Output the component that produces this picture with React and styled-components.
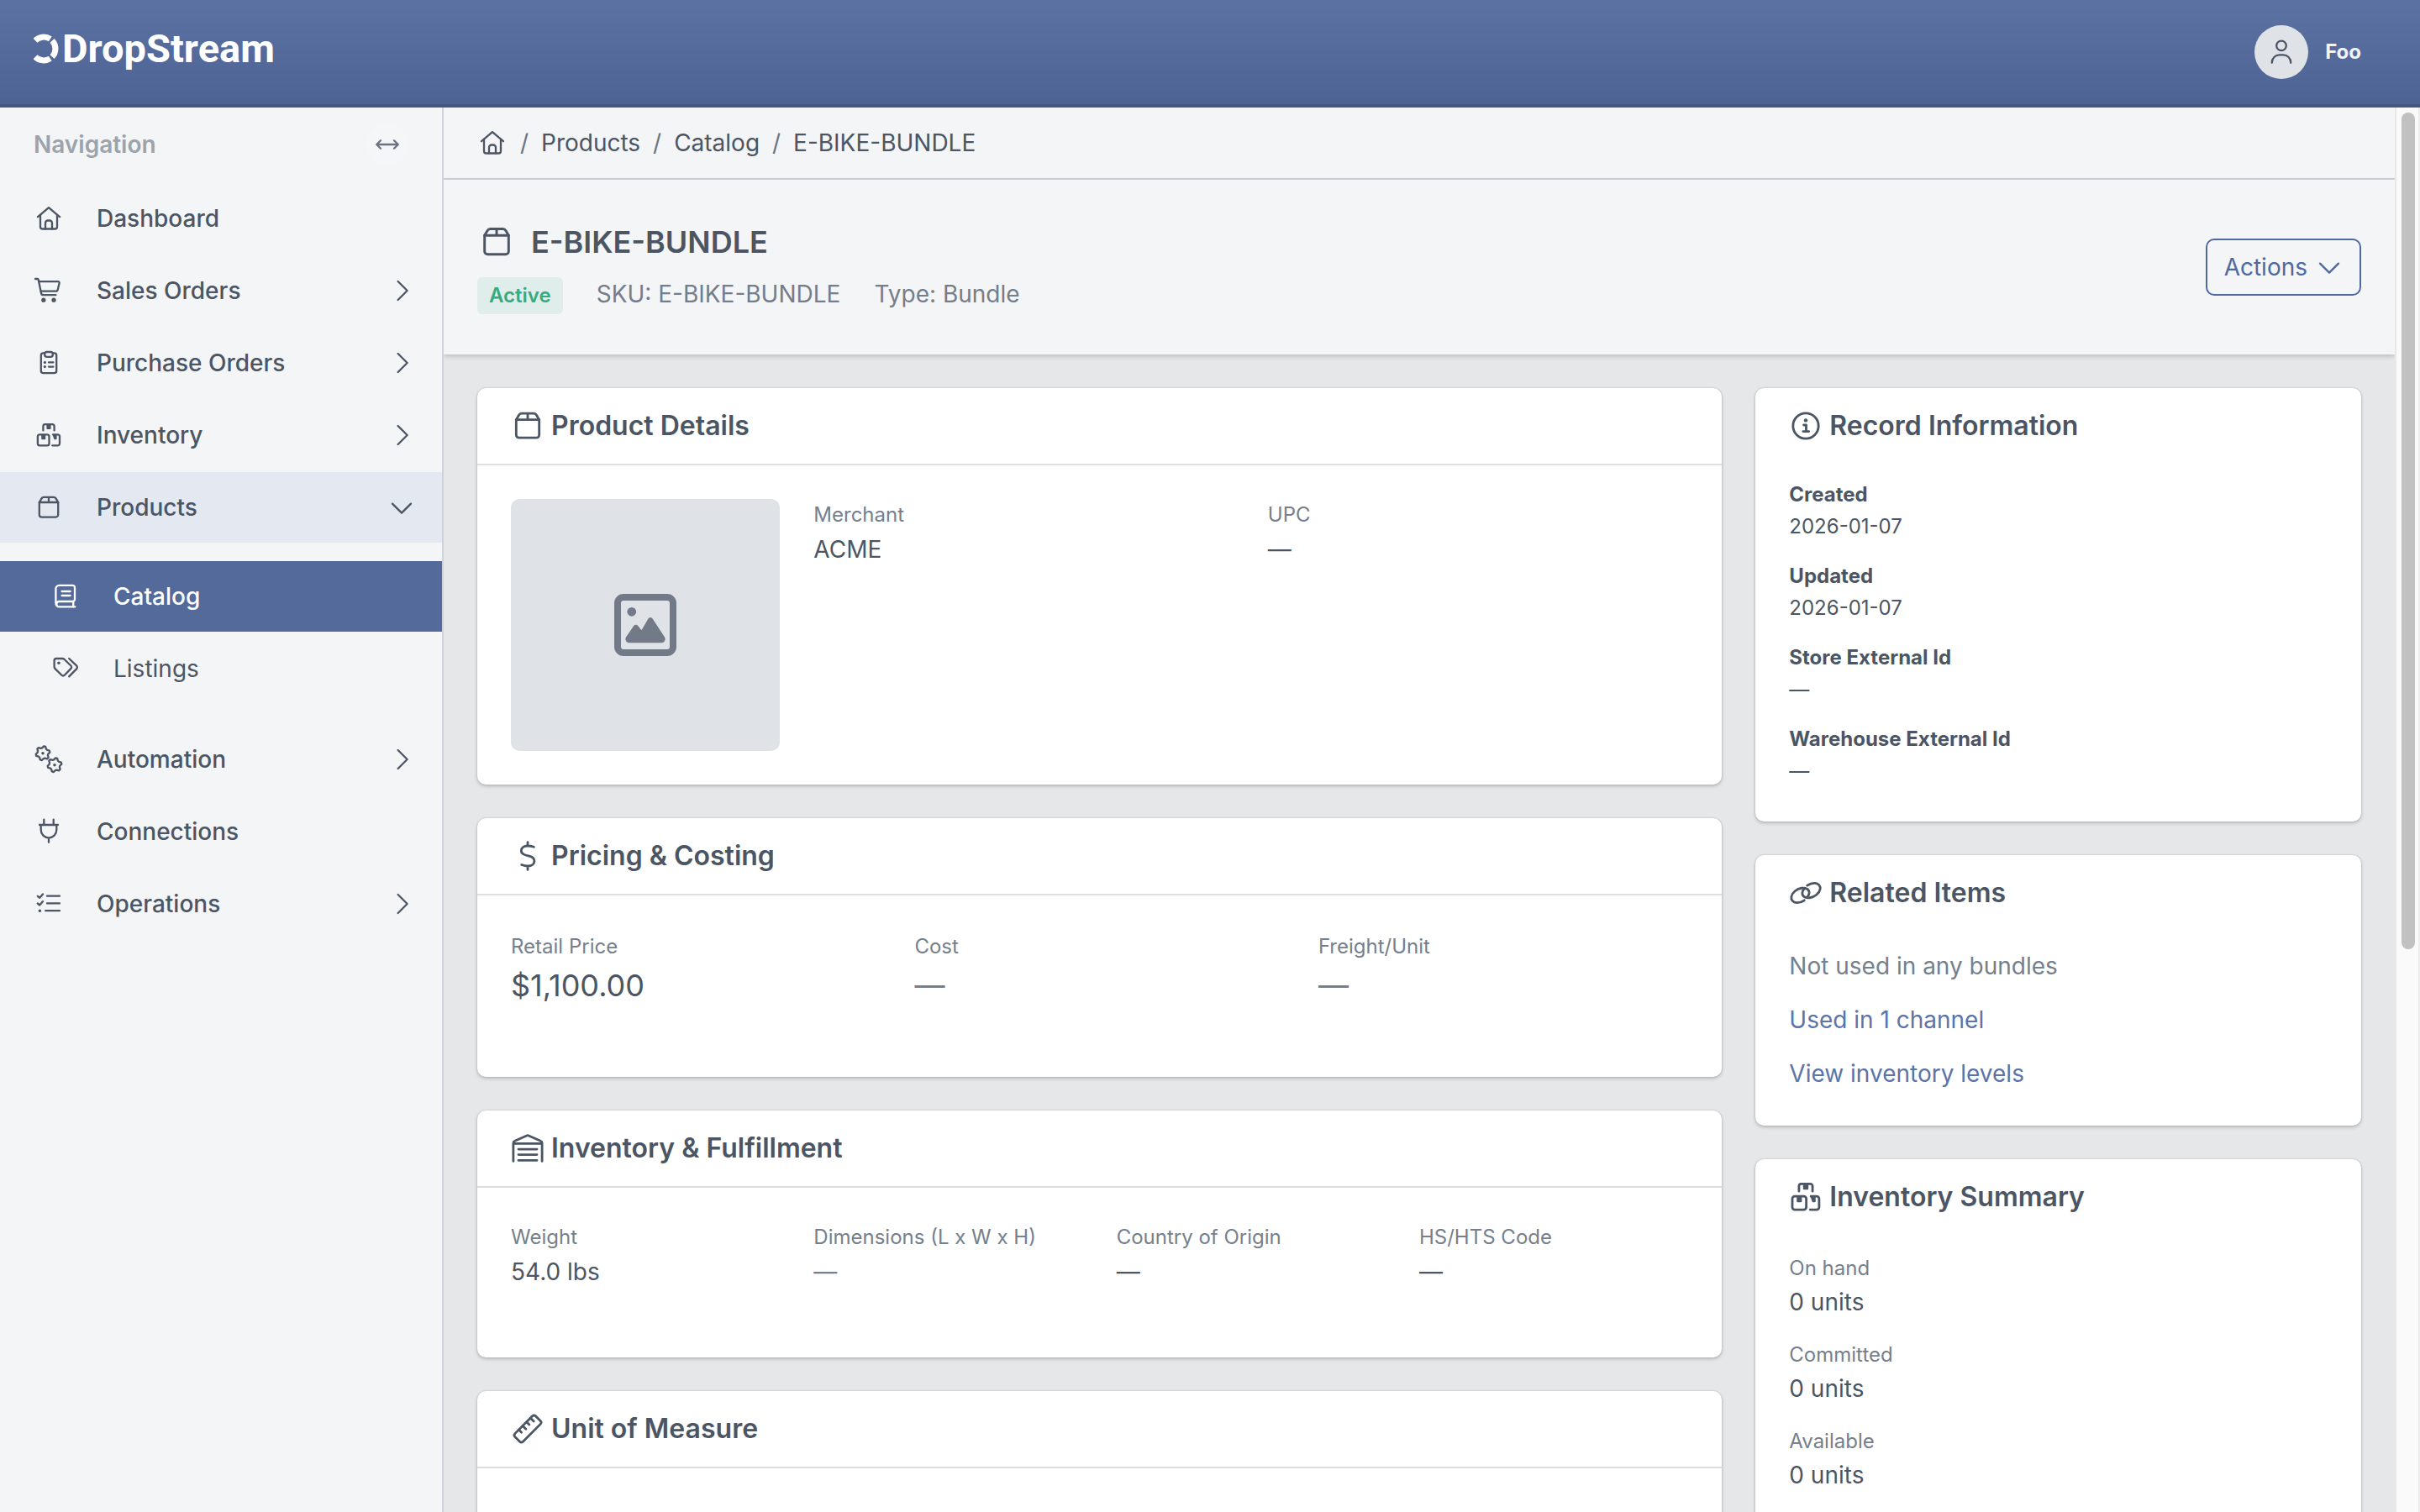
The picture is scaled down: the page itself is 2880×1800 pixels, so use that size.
import React from 'react';
import styled, { createGlobalStyle } from 'styled-components';

const GlobalStyle = createGlobalStyle`
    * {
        box-sizing: border-box;
    }
    body {
        margin: 0;
        background: #e6e7e9;
        color: #4b5563;
        font-family: Inter, "Liberation Sans", sans-serif;
        font-size: 28px;
        line-height: 44px;
    }
    a {
        color: inherit;
        text-decoration: none;
    }
    button {
        font: inherit;
        color: inherit;
        background: none;
        border: 0;
        padding: 0;
        cursor: pointer;
    }
    h1, h2, p, dl, dt, dd, ul, ol {
        margin: 0;
        padding: 0;
        list-style: none;
    }
`;

/* ---------- icons ---------- */

const Svg = styled.svg`
    display: block;
    flex: none;
    width: ${({ $size }) => $size || 36}px;
    height: ${({ $size }) => $size || 36}px;
    fill: none;
    stroke: currentColor;
    stroke-width: 2.3;
    stroke-linecap: round;
    stroke-linejoin: round;
    .solid {
        fill: currentColor;
        stroke: none;
    }
`;

const gear = (cx, cy) => {
    const points = [];
    for (let i = 0; i < 24; i += 1) {
        const angle = ((i * 15 + 7.5) * Math.PI) / 180;
        const r = i % 4 < 2 ? 6.4 : 8.4;
        points.push(`${(cx + r * Math.cos(angle)).toFixed(2)} ${(cy + r * Math.sin(angle)).toFixed(2)}`);
    }
    return `M${points.join('L')}Z`;
};

const shapes = {
    home: (
        <>
            <path d="M5 16.2 18 5.2l13 11" />
            <path d="M8 14v14a2.5 2.5 0 0 0 2.5 2.5h15A2.5 2.5 0 0 0 28 28V14" />
            <path d="M14 30.5v-7a3 3 0 0 1 3-3h2a3 3 0 0 1 3 3v7" />
        </>
    ),
    cart: (
        <>
            <path d="M2 4h2.3a1.5 1.5 0 0 1 1.5 1.2L9 20.9a2.8 2.8 0 0 0 2.8 2.3h14.6" />
            <path d="M6.4 7.2h22.8a1.5 1.5 0 0 1 1.4 1.9l-1.8 7.6a2.6 2.6 0 0 1-2.5 2H8.7" />
            <circle className="solid" cx="11.8" cy="29.2" r="2.6" />
            <circle className="solid" cx="24" cy="29.2" r="2.6" />
        </>
    ),
    clipboard: (
        <>
            <path d="M13 6.4h-1.6a2.6 2.6 0 0 0-2.6 2.6v18.6a2.6 2.6 0 0 0 2.6 2.6h13.2a2.6 2.6 0 0 0 2.6-2.6V9a2.6 2.6 0 0 0-2.6-2.6H23" />
            <rect x="13.2" y="5" width="9.6" height="5.8" rx="2.6" />
            <path d="M18 17.4h5.4M18 22.6h5.4" />
            <circle className="solid" cx="13.4" cy="17.4" r="1.6" />
            <circle className="solid" cx="13.4" cy="22.6" r="1.6" />
        </>
    ),
    boxes: (
        <>
            <path d="M11.4 12.4V7.4a2.2 2.2 0 0 1 2.2-2.2h8.8a2.2 2.2 0 0 1 2.2 2.2v5" />
            <rect x="4.9" y="17.3" width="13.6" height="13" rx="2.4" />
            <path d="M23 17.3h5.6a2.4 2.4 0 0 1 2.4 2.4v8.2a2.4 2.4 0 0 1-2.4 2.4h-6.3" />
            <path className="solid" d="M15.4 5h5.2v5a.9.9 0 0 1-.9.9h-3.4a.9.9 0 0 1-.9-.9zM9.2 17.3h5v5a.9.9 0 0 1-.9.9h-3.2a.9.9 0 0 1-.9-.9zM22.4 17.3h5.2v5a.9.9 0 0 1-.9.9h-2.2z" />
        </>
    ),
    box: (
        <>
            <path d="M6.8 12v14.8a2.8 2.8 0 0 0 2.8 2.8h16.8a2.8 2.8 0 0 0 2.8-2.8V12" />
            <path d="m6.8 12 2.7-4.6a3.2 3.2 0 0 1 2.7-1.6h11.6a3.2 3.2 0 0 1 2.7 1.6l2.7 4.6zM18 5.8V12" />
        </>
    ),
    book: (
        <>
            <path d="M10.4 30.3a4 4 0 0 1-4-4V8.8a4 4 0 0 1 4-4h16A2.6 2.6 0 0 1 29 7.4v14a2.6 2.6 0 0 1-2.6 2.6h-16a3.1 3.1 0 1 0 0 6.3h19" />
            <path d="M27.2 24v6.3M13.6 12h10M13.6 17h10" />
        </>
    ),
    tags: (
        <>
            <path d="M4.6 8.4A2.4 2.4 0 0 1 7 6h7.2a3.4 3.4 0 0 1 2.4 1l7.8 7.5a2.4 2.4 0 0 1 0 3.4l-7.6 7.9a2.4 2.4 0 0 1-3.4 0l-7.8-7.7a3.4 3.4 0 0 1-1-2.4z" />
            <path d="m22.2 6 8.8 8.4a2.8 2.8 0 0 1 0 4l-8.8 9" />
            <circle className="solid" cx="9.9" cy="11.3" r="1.8" />
        </>
    ),
    gears: (
        <>
            <path d={gear(11, 10.7)} />
            <path d={gear(25, 24.7)} />
            <circle className="solid" cx="11" cy="10.7" r="1.8" />
            <circle className="solid" cx="25" cy="24.7" r="1.8" />
        </>
    ),
    plug: (
        <path d="M12.3 3.6v6.2M23.7 3.6v6.2M7 10h22M8.7 10v6a9.3 9.3 0 0 0 18.6 0v-6M18 25.4v5.4" />
    ),
    checklist: (
        <>
            <path d="M16 8.7h15M16 17.4h15M14.2 26.2H31M4.8 8.8l2.4 2L11 6.4M4.8 17.5l2.4 2 3.8-4.4" />
            <circle className="solid" cx="7.4" cy="26.2" r="1.7" />
        </>
    ),
    dollar: (
        <path d="M18 4.6v3.6M18 27.8v3.6M24 9.2c-2-.7-4-1-6-1-3.8 0-6.3 1.9-6.3 4.7 0 2.6 2 3.7 5 4.5l2.8.7c3.2.8 5 2.2 5 4.8 0 3-2.7 4.9-6.3 4.9-2.3 0-4.2-.5-6.1-1.2" />
    ),
    warehouse: (
        <>
            <path d="M4 30.6V13a2.4 2.4 0 0 1 1.5-2.2L17 5.7a2.5 2.5 0 0 1 2 0l11.5 5.1A2.4 2.4 0 0 1 32 13v17.6M4 13.4h28" />
            <path d="M9 18.9h18M9 24.2h18M9 29.7h18" />
        </>
    ),
    ruler: (
        <>
            <path d="M22.6 5.6a2.2 2.2 0 0 1 3.1 0l4.7 4.7a2.2 2.2 0 0 1 0 3.1l-17 17a2.2 2.2 0 0 1-3.1 0l-4.7-4.7a2.2 2.2 0 0 1 0-3.1z" />
            <path d="m20.7 7.5 3.2 3.2M16.9 11.3l2.6 2.6M13.1 15.1l3.2 3.2M9.3 18.9l2.6 2.6" />
        </>
    ),
    info: (
        <>
            <circle cx="18" cy="18" r="12.4" />
            <path d="M16 17.2h2.4v6M15.4 23.4h5.6" />
            <circle className="solid" cx="18" cy="12.6" r="1.8" />
        </>
    ),
    link: (
        <>
            <path d="M16.6 25.2c-2 1.400-5 2.500-7.600 2.300-3.300-.2-5.600-2.700-5-5.800.8-4.200 5.400-7.700 10-8.400 4-.6 7.400 1.100 7.400 4.500 0 1.700-.9 3.200-2.200 4.500" />
            <path d="M19.400 10.800c2-1.400 5-2.500 7.600-2.300 3.300.2 5.600 2.700 5 5.800-.8 4.200-5.400 7.700-10 8.400-4 .6-7.400-1.100-7.400-4.500 0-1.700.9-3.200 2.200-4.500" />
        </>
    ),
    user: (
        <>
            <circle cx="18" cy="10.4" r="5.8" />
            <path d="M6.8 30.8v-.4a9 9 0 0 1 9-9h4.400a9 9 0 0 1 9 9v.4" />
        </>
    ),
    resize: <path d="M5.5 18h25M10 13.2 5.2 18l4.8 4.8M26 13.2l4.8 4.8-4.8 4.8" />,
    right: <path d="m13.6 7 11 11-11 11" />,
    down: <path d="m7 13.6 11 11 11-11" />,
};

const Icon = ({ name, size }) => (
    <Svg viewBox="0 0 36 36" $size={size} aria-hidden="true">
        {shapes[name]}
    </Svg>
);

/* ---------- top bar ---------- */

const Page = styled.div`
    display: flex;
    flex-direction: column;
    height: 100vh;
    overflow: hidden;
`;

const TopBar = styled.header`
    display: flex;
    flex: none;
    align-items: center;
    justify-content: space-between;
    height: 128px;
    padding: 0 70px 0 40px;
    background: linear-gradient(#5b72a3, #4c6393);
    border-bottom: 4px solid #43577f;
    color: #fff;
`;

const Logo = styled.a`
    display: flex;
    align-items: center;
    gap: 4px;
    padding-bottom: 8px;
    font-family: Roboto, "Liberation Sans", sans-serif;
    font-size: 47px;
    font-weight: 700;
    line-height: 56px;
`;

const LogoMark = styled.svg`
    width: 30px;
    height: 36px;
    fill: none;
    stroke: #fff;
    stroke-width: 7;
`;

const UserButton = styled.button`
    display: flex;
    align-items: center;
    gap: 20px;
    color: #f2f3f5;
    font-size: 24px;
    font-weight: 700;
`;

const Avatar = styled.span`
    display: flex;
    align-items: center;
    justify-content: center;
    width: 64px;
    height: 64px;
    border-radius: 50%;
    background: #dfe3e8;
    color: #4b5563;
`;

/* ---------- sidebar ---------- */

const Layout = styled.div`
    display: flex;
    flex: 1;
    min-height: 0;
`;

const Sidebar = styled.nav`
    flex: none;
    width: 528px;
    background: #f3f5f7;
    border-right: 2px solid #cfd3db;
`;

const SidebarTop = styled.div`
    display: flex;
    align-items: center;
    justify-content: space-between;
    height: 88px;
    margin-bottom: 2px;
    padding: 0 40px;
    color: #9ca3ab;
    font-weight: 600;
`;

const CollapseButton = styled.button`
    display: flex;
    align-items: center;
    justify-content: center;
    width: 50px;
    height: 50px;
    border-radius: 50%;
    background: #f5f6f8;
    color: #6b7280;
`;

const NavList = styled.ul`
    display: flex;
    flex-direction: column;
    gap: 2px;
`;

const SubList = styled(NavList)`
    padding: 22px 0;
`;

const NavRow = styled.button`
    display: flex;
    align-items: center;
    gap: 39px;
    width: 100%;
    height: 84px;
    padding: 0 30px 0 ${({ $sub }) => ($sub ? 60 : 40)}px;
    background: ${({ $active, $open }) => ($active && '#536a9b') || ($open && '#e3e8f1') || 'transparent'};
    color: ${({ $active }) => ($active ? '#fff' : '#4b5563')};
    font-weight: ${({ $sub, $active }) => ($sub && !$active ? 400 : 500)};
    text-align: left;
`;

const NavText = styled.span`
    flex: 1;
`;

const NavItem = ({ icon, text, expandable, open, active, sub, children }) => (
    <li>
        <NavRow
            as={expandable ? 'button' : 'a'}
            href={expandable ? undefined : '#'}
            aria-expanded={expandable ? Boolean(open) : undefined}
            $open={open}
            $active={active}
            $sub={sub}
        >
            <Icon name={icon} />
            <NavText>{text}</NavText>
            {expandable && <Icon name={open ? 'down' : 'right'} />}
        </NavRow>
        {children}
    </li>
);

/* ---------- main column ---------- */

const Main = styled.main`
    flex: 1;
    min-width: 0;
    overflow: hidden;
`;

const Breadcrumb = styled.ol`
    display: flex;
    align-items: center;
    height: 86px;
    padding: 0 40px;
    background: #f3f5f7;
    border-bottom: 2px solid #cfd3db;
    li {
        display: flex;
        align-items: center;
    }
    li + li::before {
        content: "/";
        width: 40px;
        text-align: center;
        color: #6b7280;
    }
`;

const PageHeader = styled.div`
    display: flex;
    align-items: center;
    justify-content: space-between;
    padding: 48px 40px;
    background: #f3f5f7;
    box-shadow: 0 2px 6px rgba(0, 0, 0, 0.2);
`;

const Title = styled.h1`
    display: flex;
    align-items: center;
    gap: 18px;
    margin-bottom: 16px;
    font-size: 36px;
    font-weight: 600;
    line-height: 52px;
`;

const Meta = styled.div`
    display: flex;
    gap: 40px;
    color: #757d8a;
    line-height: 40px;
`;

const Badge = styled.span`
    padding: 0 14px;
    border-radius: 6px;
    background: #e0eeeb;
    color: #36ab80;
    font-size: 24px;
    font-weight: 600;
    line-height: 44px;
`;

const ActionsButton = styled.button`
    display: flex;
    align-items: center;
    gap: 8px;
    height: 68px;
    padding: 0 18px 0 20px;
    border: 2px solid #4f69a0;
    border-radius: 10px;
    color: #4f69a0;
`;

const Content = styled.div`
    display: grid;
    grid-template-columns: repeat(12, 1fr);
    align-items: start;
    gap: 40px;
    padding: 40px;
`;

const Column = styled.div`
    display: grid;
    grid-column: span ${({ $span }) => $span};
    gap: 40px;
`;

const Card = styled.section`
    border-radius: 10px;
    background: #fff;
    box-shadow: 0 2px 4px rgba(0, 0, 0, 0.2), 0 0 2px rgba(0, 0, 0, 0.2);
`;

const CardTitle = styled.h2`
    display: flex;
    align-items: center;
    gap: 6px;
    height: 92px;
    padding: 0 38px;
    border-bottom: 2px solid ${({ $plain }) => ($plain ? 'transparent' : '#dcdee0')};
    font-size: 32px;
    font-weight: 600;
`;

const Fields = styled.dl`
    display: grid;
    grid-template-columns: repeat(${({ $columns }) => $columns}, 1fr);
    gap: 40px;
    padding: 40px;
`;

const Details = styled(Fields)`
    dl {
        grid-column: span 3;
        padding: 0;
    }
`;

const FieldBox = styled.div`
    padding-bottom: ${({ $large }) => ($large ? 44 : 40)}px;
    dt {
        color: #75808c;
        font-size: 24px;
        line-height: ${({ $large }) => ($large ? 42 : 38)}px;
    }
    dd {
        color: ${({ $muted }) => ($muted ? '#75808c' : '#4b5563')};
        font-size: ${({ $large }) => ($large ? 36 : 28)}px;
        line-height: ${({ $large }) => ($large ? 50 : 44)}px;
    }
`;

const Placeholder = styled.div`
    display: flex;
    align-items: center;
    justify-content: center;
    height: 300px;
    border-radius: 10px;
    background: #dfe3e8;
    color: #727a87;
`;

const SideFields = styled.dl`
    padding: 20px 40px;
    dt {
        color: #75808c;
        font-size: 24px;
        line-height: 36px;
    }
    dd {
        margin-bottom: 23px;
    }
`;

const RecordFields = styled.dl`
    padding: 16px 40px 20px;
    font-size: 24px;
    line-height: 38px;
    dt {
        font-weight: 700;
    }
    dd {
        margin-bottom: 21px;
    }
`;

const Related = styled.ul`
    display: grid;
    gap: 20px;
    padding: 18px 40px 40px;
    color: #75808c;
    a {
        color: #5b74a9;
    }
`;

const ScrollTrack = styled.div`
    flex: none;
    width: 30px;
    padding: 6px;
    border-left: 2px solid #e8e8e8;
    border-right: 2px solid #ededed;
    background: #fafafa;
`;

const ScrollThumb = styled.div`
    width: 16px;
    height: 60%;
    border-radius: 8px;
    background: #c1c1c1;
`;

const Field = ({ label, value, muted, large }) => (
    <FieldBox $muted={muted} $large={large}>
        <dt>{label}</dt>
        <dd>{value}</dd>
    </FieldBox>
);

const CardHeading = ({ icon, plain, children }) => (
    <CardTitle $plain={plain}>
        <Icon name={icon} size={44} />
        {children}
    </CardTitle>
);

const record = [
    ['Created', '2026-01-07'],
    ['Updated', '2026-01-07'],
    ['Store External Id', '—'],
    ['Warehouse External Id', '—'],
];

const stock = ['On hand', 'Committed', 'Available'];

const App = () => (
    <Page>
        <GlobalStyle />
        <TopBar>
            <Logo href="#">
                <LogoMark viewBox="0 0 30 36" aria-hidden="true">
                    <path d="M2 8.2A14.2 14.2 0 0 1 19.800 6.400M22.100 8.300a14.200 14.200 0 0 1 0 19.400M19.800 29.600A14.200 14.200 0 0 1 2 27.800" />
                </LogoMark>
                DropStream
            </Logo>
            <UserButton>
                <Avatar>
                    <Icon name="user" />
                </Avatar>
                Foo
            </UserButton>
        </TopBar>
        <Layout>
            <Sidebar>
                <SidebarTop>
                    Navigation
                    <CollapseButton aria-label="Collapse navigation">
                        <Icon name="resize" />
                    </CollapseButton>
                </SidebarTop>
                <NavList>
                    <NavItem icon="home" text="Dashboard" />
                    <NavItem icon="cart" text="Sales Orders" expandable />
                    <NavItem icon="clipboard" text="Purchase Orders" expandable />
                    <NavItem icon="boxes" text="Inventory" expandable />
                    <NavItem icon="box" text="Products" expandable open>
                        <SubList>
                            <NavItem icon="book" text="Catalog" sub active />
                            <NavItem icon="tags" text="Listings" sub />
                        </SubList>
                    </NavItem>
                    <NavItem icon="gears" text="Automation" expandable />
                    <NavItem icon="plug" text="Connections" />
                    <NavItem icon="checklist" text="Operations" expandable />
                </NavList>
            </Sidebar>
            <Main>
                <Breadcrumb>
                    <li>
                        <a href="#" aria-label="Home">
                            <Icon name="home" />
                        </a>
                    </li>
                    <li><a href="#">Products</a></li>
                    <li><a href="#">Catalog</a></li>
                    <li>E-BIKE-BUNDLE</li>
                </Breadcrumb>
                <PageHeader>
                    <div>
                        <Title>
                            <Icon name="box" size={46} />
                            E-BIKE-BUNDLE
                        </Title>
                        <Meta>
                            <Badge>Active</Badge>
                            <span>SKU: E-BIKE-BUNDLE</span>
                            <span>Type: Bundle</span>
                        </Meta>
                    </div>
                    <ActionsButton>
                        Actions
                        <Icon name="down" />
                    </ActionsButton>
                </PageHeader>
                <Content>
                    <Column $span={8}>
                        <Card>
                            <CardHeading icon="box">Product Details</CardHeading>
                            <Details as="div" $columns={4}>
                                <Placeholder>
                                    <Svg viewBox="0 0 74 74" $size={74} role="img" aria-label="No image">
                                        <rect x="4" y="4" width="66" height="66" rx="7" strokeWidth="8" />
                                        <circle className="solid" cx="20.8" cy="21.3" r="5.4" />
                                        <path className="solid" d="M14 51.5 23.2 38a3 3 0 0 1 5 0l4.3 5.3 7.9-13.9a3 3 0 0 1 5.2 0L60 51.5a4.400 4.400 0 0 1-3.800 6.700H17.500a4.400 4.400 0 0 1-3.500-6.700z" />
                                    </Svg>
                                </Placeholder>
                                <Fields $columns={2}>
                                    <Field label="Merchant" value="ACME" />
                                    <Field label="UPC" value="—" />
                                </Fields>
                            </Details>
                        </Card>
                        <Card>
                            <CardHeading icon="dollar">Pricing &amp; Costing</CardHeading>
                            <Fields $columns={3}>
                                <Field label="Retail Price" value="$1,100.00" large />
                                <Field label="Cost" value="—" large muted />
                                <Field label="Freight/Unit" value="—" large muted />
                            </Fields>
                        </Card>
                        <Card>
                            <CardHeading icon="warehouse">Inventory &amp; Fulfillment</CardHeading>
                            <Fields $columns={4}>
                                <Field label="Weight" value="54.0 lbs" />
                                <Field label="Dimensions (L x W x H)" value="—" muted />
                                <Field label="Country of Origin" value="—" />
                                <Field label="HS/HTS Code" value="—" />
                            </Fields>
                        </Card>
                        <Card>
                            <CardHeading icon="ruler">Unit of Measure</CardHeading>
                            <Fields $columns={4}>
                                <FieldBox />
                            </Fields>
                        </Card>
                    </Column>
                    <Column $span={4}>
                        <Card>
                            <CardHeading icon="info" plain>Record Information</CardHeading>
                            <RecordFields>
                                {record.map(([label, value]) => (
                                    <React.Fragment key={label}>
                                        <dt>{label}</dt>
                                        <dd>{value}</dd>
                                    </React.Fragment>
                                ))}
                            </RecordFields>
                        </Card>
                        <Card>
                            <CardHeading icon="link" plain>Related Items</CardHeading>
                            <Related>
                                <li>Not used in any bundles</li>
                                <li><a href="#">Used in 1 channel</a></li>
                                <li><a href="#">View inventory levels</a></li>
                            </Related>
                        </Card>
                        <Card>
                            <CardHeading icon="boxes" plain>Inventory Summary</CardHeading>
                            <SideFields>
                                {stock.map((label) => (
                                    <React.Fragment key={label}>
                                        <dt>{label}</dt>
                                        <dd>0 units</dd>
                                    </React.Fragment>
                                ))}
                            </SideFields>
                        </Card>
                    </Column>
                </Content>
            </Main>
            <ScrollTrack>
                <ScrollThumb />
            </ScrollTrack>
        </Layout>
    </Page>
);

export default App;
